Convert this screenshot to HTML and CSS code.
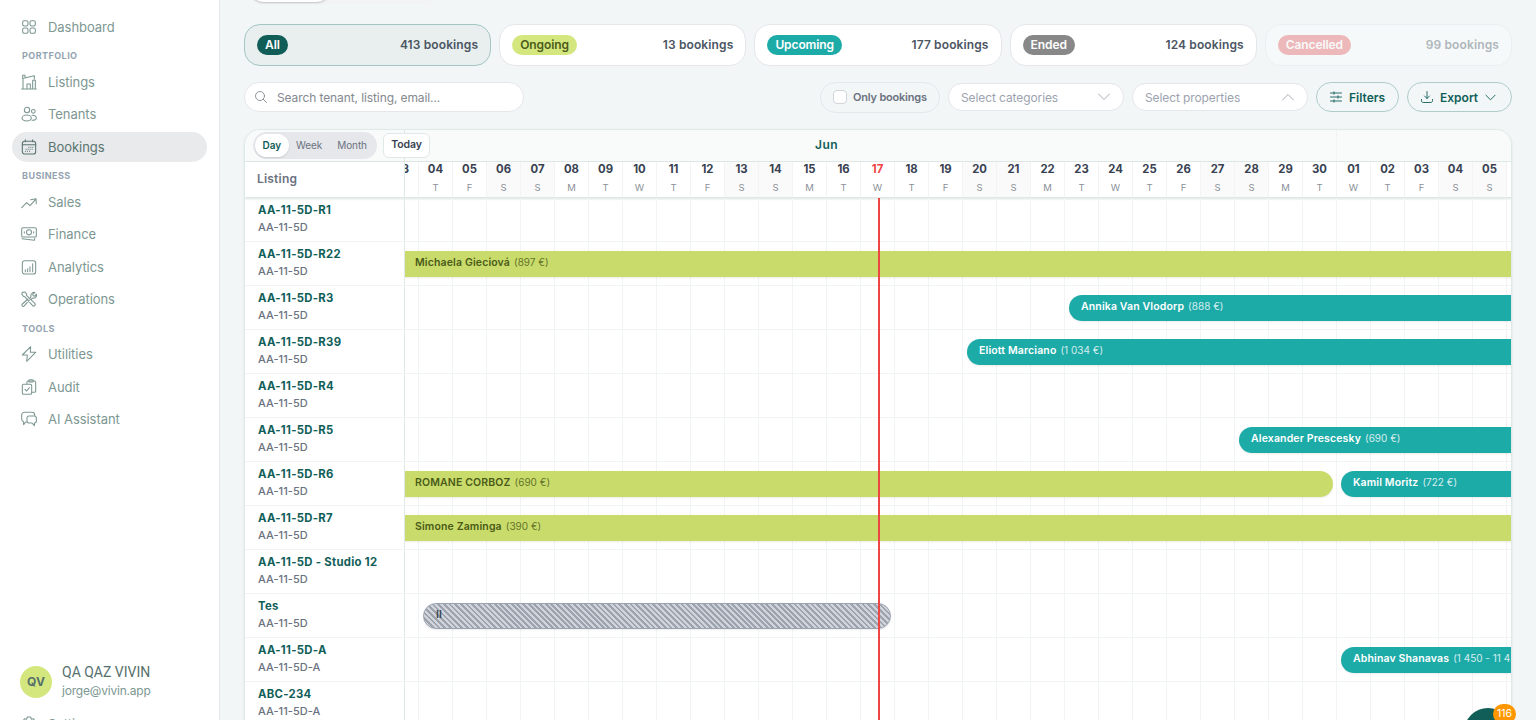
FILE: index.html
```html
<!DOCTYPE html>
<html lang="en">
<head>
  <meta charset="utf-8">
  <title>Bookings</title>
  <link rel="stylesheet" href="styles.css">
</head>
<body>
  <aside class="sidebar">
    <nav class="nav">
      <a class="nav-item">
        <svg class="icon" viewBox="0 0 24 24"><rect x="2.5" y="2.5" width="8" height="8" rx="2.5"/><rect x="13.5" y="2.5" width="8" height="8" rx="2.5"/><rect x="2.5" y="13.5" width="8" height="8" rx="2.5"/><rect x="13.5" y="13.5" width="8" height="8" rx="2.5"/></svg>
        <span>Dashboard</span>
      </a>
      <h2 class="nav-title">Portfolio</h2>
      <a class="nav-item">
        <svg class="icon" viewBox="0 0 24 24"><path d="M1 22.5h22M3 22.500V6.500M2 6.800 20 2.500v5M2.500 5V2h3.500v3.500M17.500 22.500V9.500h4v13M9 22.500V15h5v7.500"/></svg>
        <span>Listings</span>
      </a>
      <a class="nav-item">
        <svg class="icon" viewBox="0 0 24 24"><circle cx="9" cy="6" r="4"/><circle cx="18.500" cy="8" r="2.800"/><ellipse cx="8.500" cy="18" rx="7" ry="4.500"/><path d="M16.500 14c4-.5 6.500 1.300 6.500 4 0 2.300-2.500 3.600-6.500 3.300"/></svg>
        <span>Tenants</span>
      </a>
      <a class="nav-item active">
        <svg class="icon" viewBox="0 0 24 24"><rect x="2" y="3.500" width="20" height="19" rx="3.500"/><path d="M2 8.500h20M6.500 1v3M17.500 1v3"/><path class="dots" d="M11 12.500h8M7 15.500h12M6 18.500h9"/></svg>
        <span>Bookings</span>
      </a>
      <h2 class="nav-title">Business</h2>
      <a class="nav-item">
        <svg class="icon" viewBox="0 0 24 24"><path d="M1 20.500 8.500 13l5 4.500L22 8M14.500 8.500 22.500 7l.5 7.500"/></svg>
        <span>Sales</span>
      </a>
      <a class="nav-item">
        <svg class="icon" viewBox="0 0 24 24"><rect x="1" y="2.500" width="22" height="14" rx="2"/><circle cx="12" cy="9.500" r="3.800"/><path d="M5 8.500v2M19 8.500v2M1.500 19l18.500 2.500.7-3"/></svg>
        <span>Finance</span>
      </a>
      <a class="nav-item">
        <svg class="icon" viewBox="0 0 24 24"><rect x="2" y="2.500" width="20" height="20" rx="3.500"/><path d="M6.500 16v3M10 14.500V19M13.500 11.500V19M17.500 7v12"/></svg>
        <span>Analytics</span>
      </a>
      <a class="nav-item">
        <svg class="icon" viewBox="0 0 24 24"><path d="m2 2 4-.5 2.500 3.200-.3 1.800 12.500 12.200c2 2.200-1.200 5.300-3.300 3.300L5.500 8.500 3.500 8 1.200 4.500zM13.500 10.500l1.500-1.700c-1-4 2-7.300 6-6.600l-3.300 3 .6 2 2.200.6 2.700-3c.8 4.200-2.500 6.700-6 5.900L15.500 12.500M10.500 12 2 19.500c-1.800 2 .9 4.600 2.800 2.800l7.700-8.500"/></svg>
        <span>Operations</span>
      </a>
      <h2 class="nav-title">Tools</h2>
      <a class="nav-item">
        <svg class="icon" viewBox="0 0 24 24"><path d="M14.500 1 2 13.500h7.500L8.500 23 22 9.500h-8z"/></svg>
        <span>Utilities</span>
      </a>
      <a class="nav-item">
        <svg class="icon" viewBox="0 0 24 24"><path d="M9 7V5a2 2 0 0 1 2-2h9a2 2 0 0 1 2 2v13a2 2 0 0 1-2 2h-4"/><rect x="11.500" y="1" width="7" height="3.500" rx="1.500"/><path d="M4 8h10a2 2 0 0 1 2 2v11a2 2 0 0 1-2 2H4a2 2 0 0 1-2-2V10a2 2 0 0 1 2-2zM6 15.500l2.500 2.500 4-5"/></svg>
        <span>Audit</span>
      </a>
      <a class="nav-item">
        <svg class="icon" viewBox="0 0 24 24"><path d="M8 16.500H7l-3 4v-4.200C2 15.500 1 14 1 12V6c0-2.500 2-4 4.500-4h11C19 2 20.500 3.500 20.500 6v1"/><path d="M12 7.500h8c2 0 3 1.200 3 3v4.500c0 2-1 3-3 3v4l-3.500-4H12c-2 0-3-1-3-3v-4.500c0-1.800 1-3 3-3z"/></svg>
        <span>AI Assistant</span>
      </a>
    </nav>

    <div class="profile">
      <div class="avatar">QV</div>
      <div>
        <div class="profile-name">QA QAZ VIVIN</div>
        <div class="profile-email">jorge@vivin.app</div>
      </div>
    </div>
    <a class="nav-item settings">
      <svg class="icon" viewBox="0 0 24 24"><circle cx="12" cy="12" r="3.500"/><path d="M9.500 1.500h5l1 3.300 3.300-.8 2.500 4.200L19 11v2l2.300 2.800-2.500 4.200-3.300-.8-1 3.300h-5l-1-3.300-3.300.8-2.500-4.200L5 13v-2L2.700 8.200 5.200 4l3.300.8z"/></svg>
      <span>Settings</span>
    </a>
  </aside>

  <main class="main">
    <div class="tabs"><span class="tab-active"></span></div>

    <div class="stats">
      <div class="stat selected"><span class="badge all">All</span><span>413 bookings</span></div>
      <div class="stat"><span class="badge ongoing">Ongoing</span><span>13 bookings</span></div>
      <div class="stat"><span class="badge upcoming">Upcoming</span><span>177 bookings</span></div>
      <div class="stat"><span class="badge ended">Ended</span><span>124 bookings</span></div>
      <div class="stat muted"><span class="badge cancelled">Cancelled</span><span>99 bookings</span></div>
    </div>

    <div class="toolbar">
      <div class="search">
        <svg class="icon-sm" viewBox="0 0 12 12"><circle cx="5" cy="5" r="4.500"/><path d="m8.300 8.300 3.200 3.200"/></svg>
        <span>Search tenant, listing, email...</span>
      </div>
      <label class="only"><span class="checkbox"></span><span class="only-text">Only bookings</span></label>
      <div class="select"><span>Select categories</span><svg class="icon-sm" viewBox="0 0 12 12"><path d="m.5 3 5.500 5.500L11.500 3"/></svg></div>
      <div class="select"><span>Select properties</span><svg class="icon-sm" viewBox="0 0 12 12"><path d="M.5 9 6 3.500 11.500 9"/></svg></div>
      <button class="btn filters"><svg class="icon-sm" viewBox="0 0 12 12"><path d="M.5 2h11M.5 6h11M.5 10h11M4 .8v2.400M8 4.800v2.400M4 8.800v2.400"/></svg>Filters</button>
      <button class="btn export"><svg class="icon-sm" viewBox="0 0 12 12"><path d="M6 .5v7M3.500 5 6 7.500 8.500 5M.5 8.500v1.300c0 1 .7 1.700 1.700 1.700h7.600c1 0 1.700-.7 1.700-1.700V8.500"/></svg>Export<svg class="icon-xs" viewBox="0 0 12 12"><path d="m1 3.500 5 5 5-5"/></svg></button>
    </div>

    <section class="calendar">
      <div class="cal-top">
        <div class="months">
          <div class="month jun">Jun</div>
          <div class="month"></div>
        </div>
        <div class="controls">
          <div class="segmented"><span class="on">Day</span><span>Week</span><span>Month</span></div>
          <div class="today">Today</div>
        </div>
      </div>

      <div class="cal-head">
        <div class="listing-title">Listing</div>
        <div class="timeline">
          <div class="days">
            <div class="day"><b>03</b></div>
            <div class="day"><b>04</b><i>T</i></div>
            <div class="day"><b>05</b><i>F</i></div>
            <div class="day weekend"><b>06</b><i>S</i></div>
            <div class="day weekend"><b>07</b><i>S</i></div>
            <div class="day"><b>08</b><i>M</i></div>
            <div class="day"><b>09</b><i>T</i></div>
            <div class="day"><b>10</b><i>W</i></div>
            <div class="day"><b>11</b><i>T</i></div>
            <div class="day"><b>12</b><i>F</i></div>
            <div class="day weekend"><b>13</b><i>S</i></div>
            <div class="day weekend"><b>14</b><i>S</i></div>
            <div class="day"><b>15</b><i>M</i></div>
            <div class="day"><b>16</b><i>T</i></div>
            <div class="day current"><b>17</b><i>W</i></div>
            <div class="day"><b>18</b><i>T</i></div>
            <div class="day"><b>19</b><i>F</i></div>
            <div class="day weekend"><b>20</b><i>S</i></div>
            <div class="day weekend"><b>21</b><i>S</i></div>
            <div class="day"><b>22</b><i>M</i></div>
            <div class="day"><b>23</b><i>T</i></div>
            <div class="day"><b>24</b><i>W</i></div>
            <div class="day"><b>25</b><i>T</i></div>
            <div class="day"><b>26</b><i>F</i></div>
            <div class="day weekend"><b>27</b><i>S</i></div>
            <div class="day weekend"><b>28</b><i>S</i></div>
            <div class="day"><b>29</b><i>M</i></div>
            <div class="day"><b>30</b><i>T</i></div>
            <div class="day"><b>01</b><i>W</i></div>
            <div class="day"><b>02</b><i>T</i></div>
            <div class="day"><b>03</b><i>F</i></div>
            <div class="day weekend"><b>04</b><i>S</i></div>
            <div class="day weekend"><b>05</b><i>S</i></div>
            <div class="day"></div>
          </div>
        </div>
      </div>

      <div class="cal-body">
        <div class="row">
          <div class="listing"><strong>AA-11-5D-R1</strong><small>AA-11-5D</small></div>
          <div class="timeline"><div class="track"></div></div>
        </div>
        <div class="row">
          <div class="listing"><strong>AA-11-5D-R22</strong><small>AA-11-5D</small></div>
          <div class="timeline"><div class="track"><div class="bar green started" style="grid-column: 1 / 35"><b>Michaela Gieciová</b><span>(897 €)</span></div></div></div>
        </div>
        <div class="row">
          <div class="listing"><strong>AA-11-5D-R3</strong><small>AA-11-5D</small></div>
          <div class="timeline"><div class="track"><div class="bar teal" style="grid-column: 21 / 35"><b>Annika Van Vlodorp</b><span>(888 €)</span></div></div></div>
        </div>
        <div class="row">
          <div class="listing"><strong>AA-11-5D-R39</strong><small>AA-11-5D</small></div>
          <div class="timeline"><div class="track"><div class="bar teal" style="grid-column: 18 / 35"><b>Eliott Marciano</b><span>(1 034 €)</span></div></div></div>
        </div>
        <div class="row">
          <div class="listing"><strong>AA-11-5D-R4</strong><small>AA-11-5D</small></div>
          <div class="timeline"><div class="track"></div></div>
        </div>
        <div class="row">
          <div class="listing"><strong>AA-11-5D-R5</strong><small>AA-11-5D</small></div>
          <div class="timeline"><div class="track"><div class="bar teal" style="grid-column: 26 / 35"><b>Alexander Prescesky</b><span>(690 €)</span></div></div></div>
        </div>
        <div class="row">
          <div class="listing"><strong>AA-11-5D-R6</strong><small>AA-11-5D</small></div>
          <div class="timeline"><div class="track"><div class="bar green started" style="grid-column: 1 / 29"><b>ROMANE CORBOZ</b><span>(690 €)</span></div><div class="bar teal" style="grid-column: 29 / 35"><b>Kamil Moritz</b><span>(722 €)</span></div></div></div>
        </div>
        <div class="row">
          <div class="listing"><strong>AA-11-5D-R7</strong><small>AA-11-5D</small></div>
          <div class="timeline"><div class="track"><div class="bar green started" style="grid-column: 1 / 35"><b>Simone Zaminga</b><span>(390 €)</span></div></div></div>
        </div>
        <div class="row">
          <div class="listing"><strong>AA-11-5D - Studio 12</strong><small>AA-11-5D</small></div>
          <div class="timeline"><div class="track"></div></div>
        </div>
        <div class="row">
          <div class="listing"><strong>Tes</strong><small>AA-11-5D</small></div>
          <div class="timeline"><div class="track"><div class="bar blocked" style="grid-column: 2 / 16"><b>II</b></div></div></div>
        </div>
        <div class="row">
          <div class="listing"><strong>AA-11-5D-A</strong><small>AA-11-5D-A</small></div>
          <div class="timeline"><div class="track"><div class="bar teal" style="grid-column: 29 / 35"><b>Abhinav Shanavas</b><span>(1 450 - 11 450 €)</span></div></div></div>
        </div>
        <div class="row">
          <div class="listing"><strong>ABC-234</strong><small>AA-11-5D-A</small></div>
          <div class="timeline"><div class="track"></div></div>
        </div>
        <div class="now-line"></div>
      </div>
    </section>
  </main>

  <div class="chat"><span class="chat-count">116</span></div>
</body>
</html>
```
FILE: styles.css
```css
:root {
  --teal-dark: #115e59;
  --teal: #1daba8;
  --lime: #d4e77f;
  --text: #374151;
  --text-soft: #6b7280;
  --text-muted: #9ca3af;
  --nav: #7d9792;
  --line: #dfe9e7;
  --grid: #f0f4f4;
  --border: #e5e7eb;
  --day: 34px;
}

* {
  margin: 0;
  padding: 0;
  box-sizing: border-box;
}

body {
  display: flex;
  width: 1536px;
  height: 720px;
  overflow: hidden;
  background: #f2f6f7;
  color: var(--text);
  font-family: Inter, Roboto, sans-serif;
  font-size: 12px;
  white-space: nowrap;
}

svg {
  fill: none;
  stroke: currentColor;
  stroke-linecap: round;
  stroke-linejoin: round;
  flex-shrink: 0;
}

/* Sidebar */
.sidebar {
  display: flex;
  flex-direction: column;
  width: 220px;
  height: 720px;
  padding: 11.6px 12px 0;
  background: #fff;
  border-right: 1px solid var(--border);
  overflow: hidden;
  flex-shrink: 0;
}

.nav {
  display: flex;
  flex-direction: column;
  gap: 2px;
  height: 654.4px;
  flex-shrink: 0;
}

.nav-item {
  display: flex;
  align-items: center;
  gap: 11px;
  height: 30.6px;
  padding: 0 9px;
  border-radius: 16px;
  color: var(--nav);
  font-size: 13px;
  letter-spacing: -0.05px;
  flex-shrink: 0;
}

.nav-item.active {
  background: #e8eaeb;
  color: #5a7470;
}

.icon {
  width: 16px;
  height: 16px;
  stroke-width: 1.6;
}

.dots {
  stroke-dasharray: 1.5 1.5;
  stroke-linecap: butt;
}

.nav-title {
  height: 20.2px;
  padding: 5px 10px 0;
  color: #94a3b0;
  font-size: 9px;
  line-height: 13px;
  font-weight: 700;
  letter-spacing: 0.45px;
  text-transform: uppercase;
  flex-shrink: 0;
}

.profile {
  display: flex;
  align-items: center;
  gap: 10px;
  height: 32px;
  padding-left: 8px;
  flex-shrink: 0;
}

.avatar {
  width: 32px;
  height: 32px;
  border-radius: 50%;
  background: var(--lime);
  color: #56706a;
  font-weight: 700;
  line-height: 32px;
  text-align: center;
}

.profile-name {
  font-family: Roboto, sans-serif;
  font-size: 14px;
  line-height: 19px;
  color: #56706d;
}

.profile-email {
  line-height: 18px;
  letter-spacing: -0.2px;
  color: var(--nav);
}

.settings {
  margin-top: 11px;
}

/* Status cards */
.main {
  width: 1316px;
  padding: 0 24px;
}

.tabs {
  width: 200px;
  height: 24px;
  margin-top: -20px;
  padding: 0 4px 1px;
  border-radius: 0 0 20px 20px;
  background: #f1f3f4;
}

.tab-active {
  display: block;
  width: 84px;
  height: 22px;
  border-radius: 0 0 16px 16px;
  background: #fff;
  box-shadow: 0 1px 2px rgba(0, 0, 0, 0.2);
}

.stats {
  display: grid;
  grid-template-columns: repeat(5, 1fr);
  gap: 8px;
  margin-top: 20px;
}

.stat {
  display: flex;
  align-items: center;
  justify-content: space-between;
  height: 42px;
  padding: 0 12px 1px;
  border: 1px solid var(--border);
  border-radius: 16px;
  background: #fff;
  color: #4b5563;
  font-weight: 600;
  letter-spacing: 0.12px;
}

.stat.selected {
  background: #e8efee;
  border-color: #a5c6c2;
}

.stat.muted {
  opacity: 0.4;
  background: #fcffff;
}

.badge {
  height: 20px;
  margin-top: 1px;
  padding: 0 8px;
  border-radius: 10px;
  color: #fff;
  line-height: 20px;
  letter-spacing: -0.1px;
}

.badge.all { background: var(--teal-dark); }
.badge.ongoing { background: var(--lime); color: #4d5c1b; }
.badge.upcoming { background: var(--teal); }
.badge.ended { background: #888; }
.badge.cancelled { background: #e85d5d; }

/* Toolbar */
.toolbar {
  display: flex;
  align-items: center;
  gap: 8px;
  height: 30px;
  margin-top: 16px;
}

.icon-sm {
  width: 12px;
  height: 12px;
  stroke-width: 0.9;
}

.icon-xs {
  width: 11px;
  height: 11px;
  stroke-width: 1;
}

.search {
  display: flex;
  align-items: center;
  gap: 10px;
  width: 280px;
  height: 30px;
  margin-right: auto;
  padding: 0 10px;
  border: 1px solid var(--border);
  border-radius: 15px;
  background: #fff;
  color: #84898f;
  letter-spacing: -0.1px;
}

.only {
  display: flex;
  align-items: center;
  gap: 6px;
  width: 120px;
  height: 31px;
  padding-left: 12px;
  border: 1px solid var(--border);
  border-radius: 16px;
  color: var(--text-soft);
  font-size: 11px;
  font-weight: 600;
  letter-spacing: -0.2px;
}

.checkbox {
  width: 14px;
  height: 14px;
  border: 1px solid #d1d5db;
  border-radius: 4px;
  background: #fff;
}

.only-text {
  padding-bottom: 1px;
}

.select {
  display: flex;
  align-items: center;
  justify-content: space-between;
  width: 176px;
  height: 28px;
  padding: 0 13px 0 12px;
  border: 1px solid var(--border);
  border-radius: 14px;
  background: #fff;
  color: var(--text-muted);
  letter-spacing: -0.1px;
}

.btn {
  display: flex;
  align-items: center;
  gap: 7px;
  height: 30px;
  padding: 0 13px;
  border: 1px solid #b0ccc8;
  border-radius: 15px;
  background: transparent;
  color: var(--teal-dark);
  font: inherit;
  font-weight: 600;
}

.filters { width: 83px; }
.export { width: 105px; }

/* Calendar */
.calendar {
  height: 620px;
  margin-top: 17px;
  border: 1px solid var(--line);
  border-radius: 16px 16px 0 0;
  background: #fff;
  overflow: hidden;
  box-shadow: 0 1px 3px rgba(0, 0, 0, 0.08);
}

.cal-top {
  display: grid;
  height: 32px;
  background: #f8fbfa;
  border-bottom: 1px solid var(--line);
}

.controls,
.months {
  grid-area: 1 / 1;
  display: flex;
}

.controls {
  align-items: center;
  gap: 6px;
  padding-left: 8px;
  z-index: 1;
}

.months {
  margin-left: 159px;
  border-left: 1px solid var(--line);
  overflow: hidden;
}

.month {
  flex: 1;
}

/* June starts three days before the first visible one, hence the shift */
.month.jun {
  flex: none;
  width: 1020px;
  margin-left: -88px;
  border-right: 1px solid var(--grid);
  color: var(--teal-dark);
  font-weight: 600;
  letter-spacing: 0.4px;
  line-height: 30px;
  text-align: center;
}

.segmented {
  display: flex;
  align-items: center;
  width: 124px;
  height: 27px;
  padding: 0 2px;
  border-radius: 14px;
  background: #e5e7eb;
  color: var(--text-soft);
  font-size: 10px;
  letter-spacing: -0.12px;
}

.segmented span {
  height: 23px;
  padding: 0 7.6px;
  border-radius: 12px;
  line-height: 22px;
}

.segmented .on {
  background: #fff;
  color: var(--teal-dark);
  font-weight: 600;
  box-shadow: 0 1px 2px rgba(0, 0, 0, 0.12);
}

.today {
  width: 47px;
  height: 25px;
  border: 1px solid var(--line);
  border-radius: 6px;
  background: #fff;
  font-size: 10.5px;
  font-weight: 600;
  letter-spacing: -0.1px;
  line-height: 22px;
  text-align: center;
}

.cal-head {
  display: flex;
  height: 36px;
  border-bottom: 1px solid var(--line);
  box-shadow: 0 1px 2px rgba(0, 60, 50, 0.15);
}

.listing-title {
  width: 160px;
  padding-left: 12px;
  border-right: 1px solid var(--line);
  color: var(--text-soft);
  font-weight: 600;
  letter-spacing: 0.2px;
  line-height: 34px;
  flex-shrink: 0;
}

.timeline {
  flex: 1;
  min-width: 0;
  overflow: hidden;
}

.days,
.track {
  display: grid;
  grid-template-columns: repeat(34, var(--day));
  width: calc(var(--day) * 34);
  height: 100%;
  margin-left: -20px;
}

.day {
  border-right: 1px solid var(--grid);
  text-align: center;
}

.day.weekend {
  background: #fafafa;
}

.day b {
  display: block;
  height: 17px;
  font-size: 11.3px;
  font-weight: 700;
  line-height: 15px;
}

.day i {
  display: block;
  color: #8b9098;
  font-size: 9.5px;
  font-style: normal;
  line-height: 18px;
}

.day.current b {
  color: #ef4444;
}

.cal-body {
  position: relative;
}

.row {
  display: flex;
  height: 44px;
  border-bottom: 1px solid var(--grid);
}

.listing {
  width: 160px;
  padding: 4px 0 0 13px;
  border-right: 1px solid var(--line);
  flex-shrink: 0;
}

.listing strong,
.listing small {
  display: block;
  line-height: 17px;
}

.listing strong {
  color: var(--teal-dark);
  font-size: 11.3px;
  font-weight: 700;
  letter-spacing: 0.3px;
}

.listing small {
  color: var(--text-soft);
  font-size: 11px;
  font-weight: 500;
  letter-spacing: 0.05px;
}

.track {
  background: repeating-linear-gradient(to right, transparent 0 33px, var(--grid) 33px 34px);
}

.bar {
  height: 26px;
  margin: 9px 4px 0;
  padding-left: 12px;
  border-radius: 13px;
  font-size: 10.5px;
  line-height: 23px;
  overflow: hidden;
  box-shadow: 0 1px 2px rgba(0, 0, 0, 0.08);
}

.bar b {
  font-weight: 600;
  letter-spacing: 0.14px;
}

.bar span {
  margin-left: 4px;
  font-size: 10px;
  opacity: 0.8;
}

.bar.started {
  padding-left: 26px;
}

.bar.green {
  background: #c9dc6b;
  color: #4a5a18;
}

.bar.teal {
  background: var(--teal);
  color: #fff;
}

.bar.blocked {
  border: 1px solid #9ca3af;
  background: repeating-linear-gradient(45deg, #d1d5db 0 2px, #9ca3af 2px 4px);
  line-height: 21px;
}

.now-line {
  position: absolute;
  top: 0;
  bottom: 0;
  left: 633px;
  width: 2px;
  background: #ef4444;
}

/* Floating chat button */
.chat {
  position: absolute;
  left: 1464px;
  top: 708px;
  width: 48px;
  height: 48px;
  border-radius: 50%;
  background: var(--teal-dark);
}

.chat-count {
  position: absolute;
  top: -4px;
  right: -4px;
  width: 23px;
  height: 20px;
  border-radius: 10px;
  background: #ff9800;
  color: #fff;
  font-size: 10.5px;
  line-height: 20px;
  text-align: center;
}
```
